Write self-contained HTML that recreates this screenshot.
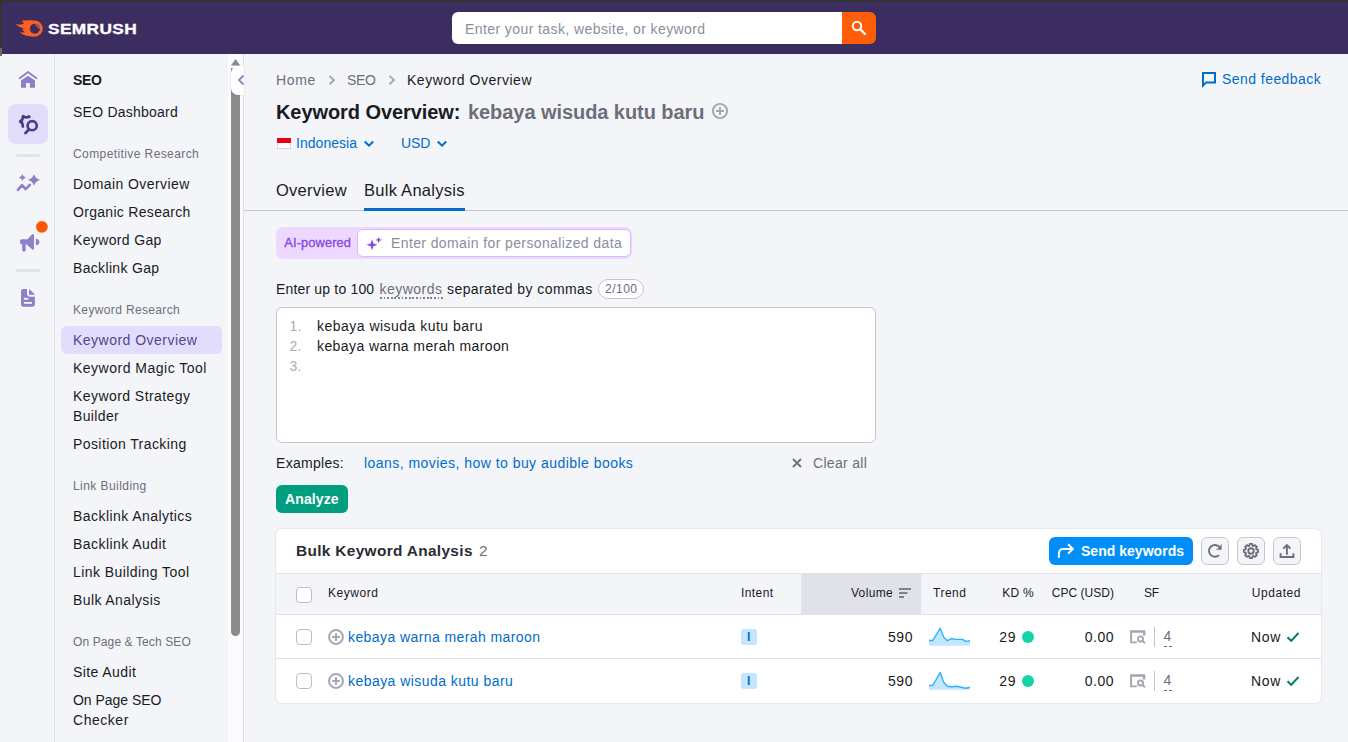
<!DOCTYPE html>
<html>
<head>
<meta charset="utf-8">
<style>
*{box-sizing:border-box;margin:0;padding:0}
html,body{width:1348px;height:742px;overflow:hidden;font-family:"Liberation Sans",sans-serif}
body{background:#f4f5f9;font-family:"Liberation Sans",sans-serif;color:#191b23;position:relative;font-size:15px}
.abs{position:absolute}
.t{position:absolute;white-space:nowrap;line-height:20px}
#topstrip{left:0;top:0;width:1348px;height:2px;background:#333333}
#leftstrip{left:0;top:0;width:2px;height:48px;background:#333333;z-index:5}
#leftstrip2{left:0;top:48px;width:2px;height:7.5px;background:#6b6b6b;z-index:5}
#header{left:2px;top:2px;width:1346px;height:51.6px;background:#3b2d5f}
#rail{left:0;top:54px;width:55px;height:688px;background:#f4f5f9;border-right:1px solid #e0e1e9}
#side{left:56px;top:54px;width:172px;height:688px;background:#f4f5f9}
#sbtrack{left:228px;top:54px;width:15px;height:688px;background:#fbfbfd}
#sbthumb{left:231px;top:68px;width:9px;height:568px;background:#8b8b8b;border-radius:0 0 5px 5px}
#mainborder{left:243px;top:54px;width:1px;height:688px;background:#e0e1e9}
.nav{left:73px;font-size:15px;color:#191b23}
.grp{left:73px;font-size:13px;color:#6c6e79}
.lnk{color:#006dca}
</style>
</head>
<body>
<div class="abs" id="header"></div>
<div class="abs" id="topstrip"></div>
<div class="abs" id="leftstrip"></div><div class="abs" id="leftstrip2"></div>

<!-- logo -->
<svg class="abs" style="left:15px;top:19px" width="30" height="20" viewBox="0 0 30 20">
<path d="M19.7 1.6 C15 1.1 10 1.3 6.4 1.9 C8.6 3 9.2 4.2 8.4 4.9 C6 5.5 3 5.6 0.5 5.3 C3 7.6 7 9.3 10.5 10 L7.2 10.2 C8 11.5 9 12.6 10.2 13.2 L5 13.6 C8 16.3 13 17.9 19.7 17.7 A8.05 8.05 0 0 0 19.7 1.6 Z" fill="#ff5f1f"/>
<circle cx="19.8" cy="9.7" r="5" fill="#3b2d5f"/>
<path d="M20.6 5.9 C22.3 6.3 23.4 7.4 23.8 9.1" stroke="#ff8a5c" stroke-width="1" fill="none" stroke-linecap="round"/>
</svg>
<div class="t" id="logotext" style="left:47.5px;top:19px;font-size:14px;font-weight:bold;color:#fff;letter-spacing:0.3px;-webkit-text-stroke:0.3px #fff;transform-origin:0 50%;transform:scaleX(1.235)">SEMRUSH</div>

<!-- search -->
<div class="abs" style="left:452px;top:12px;width:390px;height:32px;background:#fff;border-radius:6px 0 0 6px"></div>
<div class="abs" style="left:842px;top:12px;width:34px;height:32px;background:#ff5d08;border-radius:0 6px 6px 0"></div>
<div class="t" id="ph1" style="letter-spacing:0.414px;left:465px;top:18.5px;font-size:14px;color:#8a8e9b">Enter your task, website, or keyword</div>
<svg class="abs" style="left:850px;top:19px" width="18" height="18" viewBox="0 0 18 18"><circle cx="7" cy="7" r="4.2" stroke="#fff" stroke-width="2" fill="none"/><path d="M10.3 10.3 L15 15" stroke="#fff" stroke-width="2.4" stroke-linecap="round"/></svg>

<div class="abs" id="rail"></div>
<div class="abs" id="side"></div>
<div class="abs" id="sbtrack"></div>
<div class="abs" id="sbthumb"></div>
<div class="abs" id="mainborder"></div>

<!-- sidebar nav -->
<div class="abs" style="left:61px;top:326px;width:161px;height:27.6px;background:#e3ddfd;border-radius:6px"></div>
<div class="t nav" id="n0" style="letter-spacing:-0.297px;font-size:14px;top:70px;font-weight:bold">SEO</div>
<div class="t nav" id="n1" style="letter-spacing:0.23px;font-size:14px;top:102px">SEO Dashboard</div>
<div class="t grp" id="n2" style="letter-spacing:0.406px;font-size:12px;top:144px">Competitive Research</div>
<div class="t nav" id="n3" style="letter-spacing:0.412px;font-size:14px;top:174px">Domain Overview</div>
<div class="t nav" id="n4" style="letter-spacing:0.304px;font-size:14px;top:202px">Organic Research</div>
<div class="t nav" id="n5" style="letter-spacing:0.359px;font-size:14px;top:230px">Keyword Gap</div>
<div class="t nav" id="n6" style="letter-spacing:0.333px;font-size:14px;top:258px">Backlink Gap</div>
<div class="t grp" id="n7" style="letter-spacing:0.358px;font-size:12px;top:300px">Keyword Research</div>
<div class="t nav" id="n8" style="letter-spacing:0.484px;font-size:14px;top:330px;color:#54468c">Keyword Overview</div>
<div class="t nav" id="n9" style="letter-spacing:0.496px;font-size:14px;top:358px">Keyword Magic Tool</div>
<div class="t nav" id="n10" style="letter-spacing:0.438px;font-size:14px;top:386px">Keyword Strategy</div>
<div class="t nav" id="n11" style="letter-spacing:0.357px;font-size:14px;top:406px">Builder</div>
<div class="t nav" id="n12" style="letter-spacing:0.414px;font-size:14px;top:434px">Position Tracking</div>
<div class="t grp" id="n13" style="letter-spacing:0.436px;font-size:12px;top:476px">Link Building</div>
<div class="t nav" id="n14" style="letter-spacing:0.441px;font-size:14px;top:506px">Backlink Analytics</div>
<div class="t nav" id="n15" style="letter-spacing:0.444px;font-size:14px;top:534px">Backlink Audit</div>
<div class="t nav" id="n16" style="letter-spacing:0.431px;font-size:14px;top:562px">Link Building Tool</div>
<div class="t nav" id="n17" style="letter-spacing:0.392px;font-size:14px;top:590px">Bulk Analysis</div>
<div class="t grp" id="n18" style="letter-spacing:0.114px;font-size:12px;top:632px">On Page &amp; Tech SEO</div>
<div class="t nav" id="n19" style="letter-spacing:0.423px;font-size:14px;top:662px">Site Audit</div>
<div class="t nav" id="n20" style="letter-spacing:-0.033px;font-size:14px;top:690px">On Page SEO</div>
<div class="t nav" id="n21" style="letter-spacing:0.531px;font-size:14px;top:710px">Checker</div>
<svg class="abs" style="left:230px;top:58px" width="11" height="8" viewBox="0 0 11 8"><path d="M1 7.5 L5.6 1 L10.2 7.5 Z" fill="#8b8b8b"/></svg>
<div class="abs" style="left:231px;top:66px;width:13px;height:29px;background:#fff;border-radius:7px 0 0 7px;box-shadow:0 0 2px rgba(0,0,0,0.15)"></div>
<svg class="abs" style="left:237px;top:74px" width="8" height="12" viewBox="0 0 8 12"><path d="M6.5 1.5 L2 6 L6.5 10.5" stroke="#8d80c9" stroke-width="1.8" fill="none"/></svg>

<!-- breadcrumbs -->
<div class="t" id="bc1" style="letter-spacing:0.664px;left:276px;top:70px;font-size:14px;color:#6c6e79">Home</div>
<svg class="abs" style="left:327px;top:74px" width="8" height="12" viewBox="0 0 8 12"><path d="M2.5 1.9 L7 6.1 L2.5 10.3" stroke="#a6a8b3" stroke-width="2" fill="none"/></svg>
<div class="t" id="bc2" style="letter-spacing:-0.365px;left:347px;top:70px;font-size:14px;color:#6c6e79">SEO</div>
<svg class="abs" style="left:387px;top:74px" width="8" height="12" viewBox="0 0 8 12"><path d="M2.5 1.9 L7 6.1 L2.5 10.3" stroke="#a6a8b3" stroke-width="2" fill="none"/></svg>
<div class="t" id="bc3" style="letter-spacing:0.521px;left:407px;top:70px;font-size:14px;color:#191b23">Keyword Overview</div>
<!-- send feedback -->
<svg class="abs" style="left:1201px;top:71px" width="17" height="17" viewBox="0 0 17 17"><path d="M2 14.6 V2 H14 V11.4 H5.2 Z" stroke="#006dca" stroke-width="2" fill="none" stroke-linejoin="miter"/></svg>
<div class="t lnk" id="sf" style="letter-spacing:0.445px;left:1222px;top:69px;font-size:14px">Send feedback</div>
<!-- title -->
<div class="t" id="ttl1" style="letter-spacing:-0.071px;left:276px;top:100px;font-size:20px;line-height:24px;font-weight:bold;color:#191b23">Keyword Overview:</div>
<div class="t" id="ttl2" style="letter-spacing:-0.065px;left:468px;top:100px;font-size:20px;line-height:24px;font-weight:bold;color:#6c6e79">kebaya wisuda kutu baru</div>
<svg class="abs" style="left:711px;top:102px" width="18" height="18" viewBox="0 0 18 18"><circle cx="9" cy="9" r="7.1" stroke="#a3a5b0" stroke-width="1.9" fill="none"/><path d="M9 5 V13 M5 9 H13" stroke="#a3a5b0" stroke-width="1.9"/></svg>
<!-- country / currency -->
<div class="abs" style="left:277px;top:138px;width:14px;height:10.5px;background:#fff;border:1px solid #d6d7dd;border-top:none"></div>
<div class="abs" style="left:277px;top:138px;width:14px;height:5.3px;background:#e70011"></div>
<div class="t lnk" id="ctry" style="letter-spacing:0.038px;left:296px;top:133px;font-size:14px">Indonesia</div>
<svg class="abs" style="left:363px;top:139px" width="12" height="10" viewBox="0 0 12 10"><path d="M1.8 2.5 L6 6.7 L10.2 2.5" stroke="#006dca" stroke-width="2" fill="none"/></svg>
<div class="t lnk" id="cur" style="letter-spacing:-0.062px;left:401px;top:133px;font-size:14px">USD</div>
<svg class="abs" style="left:436px;top:139px" width="12" height="10" viewBox="0 0 12 10"><path d="M1.8 2.5 L6 6.7 L10.2 2.5" stroke="#006dca" stroke-width="2" fill="none"/></svg>
<!-- tabs -->
<div class="abs" style="left:244px;top:210px;width:1104px;height:1px;background:#c4c7cf"></div>
<div class="t" id="tab1" style="left:276px;top:180px;font-size:16.5px;letter-spacing:0.27px;color:#191b23">Overview</div>
<div class="t" id="tab2" style="left:364px;top:180px;font-size:16.5px;letter-spacing:0.27px;color:#191b23">Bulk Analysis</div>
<div class="abs" style="left:364px;top:208px;width:101px;height:3px;background:#006dca"></div>
<!-- AI powered -->
<div class="abs" style="left:276px;top:227px;width:356px;height:32px;background:#edd9ff;border-radius:7px"></div>
<div class="t" id="aip" style="letter-spacing:0.13px;left:284.3px;top:233px;font-size:12.8px;color:#8649e1;-webkit-text-stroke:0.35px #8649e1">AI-powered</div>
<div class="abs" style="left:357px;top:229px;width:273.5px;height:27.5px;background:#fff;border:1px solid #dcb8ff;border-radius:6px"></div>
<svg class="abs" style="left:365.2px;top:234.6px" width="18.5" height="18.5" viewBox="0 0 17 17"><path d="M6.5 4 L7.8 7.7 L11.5 9 L7.8 10.3 L6.5 14 L5.2 10.3 L1.5 9 L5.2 7.7 Z" fill="#8649e1"/><path d="M12.5 1.5 L13.3 3.7 L15.5 4.5 L13.3 5.3 L12.5 7.5 L11.7 5.3 L9.5 4.5 L11.7 3.7 Z" fill="#8649e1"/></svg>
<div class="t" id="ph2" style="letter-spacing:0.388px;left:391px;top:233px;font-size:14px;color:#8a8e9b">Enter domain for personalized data</div>
<!-- label -->
<div class="t" id="lbl1" style="letter-spacing:0.17px;left:276px;top:279px;font-size:14px;color:#191b23">Enter up to 100</div><div class="t" id="lbl2" style="letter-spacing:0.5px;left:379.4px;top:279px;font-size:14px;color:#6c6e79">keywords</div><div class="abs" style="left:380px;top:297px;width:62.5px;height:1.6px;background:repeating-linear-gradient(90deg,#7d808c 0 1.9px,transparent 1.9px 3.6px)"></div><div class="t" id="lbl3" style="letter-spacing:0.42px;left:447px;top:279px;font-size:14px;color:#191b23">separated by commas</div>
<div class="abs" style="left:598px;top:279px;width:46px;height:20px;background:#fff;border:1px solid #c4c7cf;border-radius:10px"></div>
<div class="t" id="cnt" style="letter-spacing:0.503px;left:605px;top:279px;font-size:12px;color:#6c6e79">2/100</div>
<!-- textarea -->
<div class="abs" style="left:276px;top:307px;width:600px;height:136px;background:#fff;border:1px solid #c4c7cf;border-radius:6px"></div>
<div class="t" style="letter-spacing:0px;left:289.6px;top:316px;font-size:14px;color:#a9abb6">1.</div>
<div class="t" style="letter-spacing:0px;left:289.6px;top:336px;font-size:14px;color:#a9abb6">2.</div>
<div class="t" style="letter-spacing:0px;left:289.6px;top:356px;font-size:14px;color:#a9abb6">3.</div>
<div class="t" id="kw1" style="letter-spacing:0.481px;left:317px;top:316px;font-size:14px;color:#191b23">kebaya wisuda kutu baru</div>
<div class="t" id="kw2" style="letter-spacing:0.408px;left:317px;top:336px;font-size:14px;color:#191b23">kebaya warna merah maroon</div>
<!-- examples -->
<div class="t" id="ex1" style="letter-spacing:0.297px;left:276px;top:453px;font-size:14px;color:#191b23">Examples:</div>
<div class="t lnk" id="ex2" style="letter-spacing:0.46px;left:364px;top:453px;font-size:14px">loans, movies, how to buy audible books</div>
<svg class="abs" style="left:791px;top:457px" width="12" height="12" viewBox="0 0 12 12"><path d="M2 2 L10 10 M10 2 L2 10" stroke="#6c6e79" stroke-width="1.8"/></svg>
<div class="t" id="clr" style="letter-spacing:0.318px;left:813px;top:453px;font-size:14px;color:#6c6e79">Clear all</div>
<!-- analyze -->
<div class="abs" style="left:276px;top:485px;width:72px;height:28px;background:#009f81;border-radius:6px"></div>
<div class="t" id="anz" style="letter-spacing:0.109px;left:285px;top:489px;font-size:14px;color:#fff;font-weight:bold">Analyze</div>

<!-- table card -->
<div class="abs" style="left:276px;top:529px;width:1045px;height:174px;background:#fff;border-radius:6px;box-shadow:0 0 1px 1px rgba(25,27,35,0.06)"></div>
<div class="t" id="bka" style="left:296px;top:541px;font-size:15.4px;letter-spacing:0.34px;font-weight:bold;color:#2a2c34">Bulk Keyword Analysis <span style="font-weight:normal;color:#6c6e79;margin-left:1.5px">2</span></div>
<div class="abs" style="left:1049px;top:537px;width:144px;height:28px;background:#008ff8;border-radius:6px"></div>
<svg class="abs" style="left:1057px;top:543px" width="18" height="16" viewBox="0 0 18 16"><path d="M1.9 14.7 V10.5 Q1.9 6 6.4 6 H15.3" stroke="#fff" stroke-width="2" fill="none"/><path d="M11.1 1.3 L15.9 6 L11.1 10.6" stroke="#fff" stroke-width="2" fill="none"/></svg>
<div class="t" id="sk" style="letter-spacing:0.026px;left:1081px;top:541px;font-size:14px;font-weight:bold;color:#fff">Send keywords</div>
<div class="abs" style="left:1201px;top:537px;width:28px;height:28px;background:#f4f5f9;border:1px solid #c4c7cf;border-radius:6px"></div>
<div class="abs" style="left:1237px;top:537px;width:28px;height:28px;background:#f4f5f9;border:1px solid #c4c7cf;border-radius:6px"></div>
<div class="abs" style="left:1273px;top:537px;width:28px;height:28px;background:#f4f5f9;border:1px solid #c4c7cf;border-radius:6px"></div>
<svg class="abs" style="left:1207px;top:543px" width="16" height="16" viewBox="0 0 16 16"><path d="M12.42 4.11 A5.9 5.9 0 1 0 12.07 12.07" stroke="#6c6e79" stroke-width="1.9" fill="none"/><path d="M14.6 0.8 V6.7 H8.9 L11.6 5 L13 3.2 Z" fill="#6c6e79"/></svg>
<svg class="abs" style="left:1241.8px;top:541.9px" width="18" height="18" viewBox="0 0 18 18"><path d="M7.48 3.61 L7.71 1.92 L10.29 1.92 L10.52 3.61 L11.74 4.11 L13.09 3.08 L14.92 4.91 L13.89 6.26 L14.39 7.48 L16.08 7.71 L16.08 10.29 L14.39 10.52 L13.89 11.74 L14.92 13.09 L13.09 14.92 L11.74 13.89 L10.52 14.39 L10.29 16.08 L7.71 16.08 L7.48 14.39 L6.26 13.89 L4.91 14.92 L3.08 13.09 L4.11 11.74 L3.61 10.52 L1.92 10.29 L1.92 7.71 L3.61 7.48 L4.11 6.26 L3.08 4.91 L4.91 3.08 L6.26 4.11 Z" stroke="#6c6e79" stroke-width="1.8" fill="none" stroke-linejoin="round"/><circle cx="9" cy="9" r="2.7" fill="none" stroke="#6c6e79" stroke-width="1.9"/></svg>
<svg class="abs" style="left:1279px;top:543px" width="16" height="16" viewBox="0 0 16 16"><path d="M7.9 11.8 V2.4 M4.3 5.7 L7.9 2 L11.5 5.7" stroke="#6c6e79" stroke-width="1.9" fill="none"/><path d="M1.6 10.2 V14 H14.4 V10.2" stroke="#6c6e79" stroke-width="1.9" fill="none"/></svg>
<div class="abs" style="left:276px;top:573px;width:1045px;height:42px;background:#f4f5f9;border-top:1px solid #e0e1e9;border-bottom:1px solid #e0e1e9"></div>
<div class="abs" style="left:801px;top:573px;width:120px;height:41px;background:#e0e1e9"></div>
<div class="abs" style="left:296px;top:587px;width:16px;height:16px;background:#fff;border:1px solid #bbbec7;border-radius:4px"></div>
<div class="t" id="h1" style="letter-spacing:0.556px;left:328px;top:583px;font-size:12px;color:#191b23">Keyword</div>
<div class="t" id="h2" style="letter-spacing:0.417px;left:741px;top:583px;font-size:12px;color:#191b23">Intent</div>
<div class="t" id="h3" style="letter-spacing:0.339px;right:455px;top:583px;font-size:12px;color:#191b23">Volume</div>
<div class="t" id="h4" style="letter-spacing:0.516px;left:933px;top:583px;font-size:12px;color:#191b23">Trend</div>
<div class="t" id="h5" style="letter-spacing:0.262px;right:314px;top:583px;font-size:12px;color:#191b23">KD %</div>
<div class="t" id="h6" style="letter-spacing:0.019px;right:234px;top:583px;font-size:12px;color:#191b23">CPC (USD)</div>
<div class="t" id="h7" style="letter-spacing:-0.266px;left:1144px;top:583px;font-size:12px;color:#191b23">SF</div>
<div class="t" id="h8" style="letter-spacing:0.54px;right:47px;top:583px;font-size:12px;color:#191b23">Updated</div>
<svg class="abs" style="left:898px;top:587px" width="14" height="12" viewBox="0 0 14 12"><path d="M1 2 H13 M1 6 H9.5 M1 10 H6" stroke="#7f818c" stroke-width="1.8"/></svg>
<div class="abs" style="left:276px;top:658px;width:1045px;height:1px;background:#e0e1e9"></div>
<div class="abs" style="left:296px;top:629px;width:16px;height:16px;background:#fff;border:1px solid #bbbec7;border-radius:4px"></div>
<svg class="abs" style="left:326.85px;top:628px" width="18" height="18" viewBox="0 0 18 18"><circle cx="9" cy="9" r="6.95" stroke="#a3a5b0" stroke-width="2" fill="none"/><path d="M9 5.2 V12.8 M5.2 9 H12.8" stroke="#a3a5b0" stroke-width="2"/></svg>
<div class="t lnk" id="r1k" style="letter-spacing:0.412px;left:348px;top:627px;font-size:14px">kebaya warna merah maroon</div>
<div class="abs" style="left:741px;top:629px;width:16px;height:16px;background:#c4e5fe;border-radius:3px"></div>
<div class="t" style="left:747px;top:627px;font-size:12px;font-weight:bold;color:#006dca">I</div>
<div class="t" id="r1v" style="letter-spacing:0.557px;right:435px;top:627px;font-size:14px;color:#191b23">590</div>
<svg class="abs" style="left:929px;top:626px" width="42" height="20" viewBox="0 0 42 20"><polygon points="0,14.2 3.6,14.7 11.2,2.3 14.7,11.2 18.5,14.7 22.3,12.5 26.3,13.4 33.4,13.4 36.9,15.4 41,14.7 41,19.8 0,19.8" fill="#c4e5fe"/><polyline points="0,14.2 3.6,14.7 11.2,2.3 14.7,11.2 18.5,14.7 22.3,12.5 26.3,13.4 33.4,13.4 36.9,15.4 41,14.7" stroke="#2bb3ff" stroke-width="1.4" fill="none" stroke-linejoin="round"/></svg>
<div class="t" id="r1kd" style="letter-spacing:0.555px;right:332px;top:627px;font-size:14px;color:#191b23">29</div>
<div class="abs" style="left:1022px;top:631px;width:12px;height:12px;background:#12d5a8;border-radius:50%"></div>
<div class="t" id="r1c" style="letter-spacing:0.488px;right:234px;top:627px;font-size:14px;color:#191b23">0.00</div>
<svg class="abs" style="left:1130px;top:630px" width="16" height="14" viewBox="0 0 16 14"><path d="M6.8 12.4 H1.1 V1.2" stroke="#a3a5b0" stroke-width="1.9" fill="none"/><path d="M0.2 1.5 H15 M14.1 1.5 V5.4" stroke="#a3a5b0" stroke-width="2.6" fill="none"/><circle cx="10.5" cy="8.9" r="2.6" stroke="#a3a5b0" stroke-width="1.8" fill="none"/><path d="M12.5 10.9 L14.9 13.3" stroke="#a3a5b0" stroke-width="1.9"/></svg>
<div class="abs" style="left:1154px;top:627px;width:1px;height:20px;background:#c4c7cf"></div>
<div class="t" id="r1s" style="letter-spacing:0.547px;left:1163.6px;top:626px;font-size:14px;color:#6c6e79">4</div>
<div class="abs" style="left:1163.5px;top:646px;width:9px;height:1px;background:repeating-linear-gradient(90deg,#6c6e79 0 3px,transparent 3px 5px)"></div>
<div class="t" id="r1u" style="letter-spacing:0.667px;right:67px;top:627px;font-size:14px;color:#191b23">Now</div>
<svg class="abs" style="left:1286px;top:631px" width="14" height="12" viewBox="0 0 14 12"><path d="M1.5 6.2 L5.2 9.8 L12.5 2" stroke="#007c65" stroke-width="1.9" fill="none"/></svg>
<div class="abs" style="left:296px;top:673px;width:16px;height:16px;background:#fff;border:1px solid #bbbec7;border-radius:4px"></div>
<svg class="abs" style="left:326.85px;top:672px" width="18" height="18" viewBox="0 0 18 18"><circle cx="9" cy="9" r="6.95" stroke="#a3a5b0" stroke-width="2" fill="none"/><path d="M9 5.2 V12.8 M5.2 9 H12.8" stroke="#a3a5b0" stroke-width="2"/></svg>
<div class="t lnk" id="r2k" style="letter-spacing:0.451px;left:348px;top:671px;font-size:14px">kebaya wisuda kutu baru</div>
<div class="abs" style="left:741px;top:673px;width:16px;height:16px;background:#c4e5fe;border-radius:3px"></div>
<div class="t" style="left:747px;top:671px;font-size:12px;font-weight:bold;color:#006dca">I</div>
<div class="t" id="r2v" style="letter-spacing:0.557px;right:435px;top:671px;font-size:14px;color:#191b23">590</div>
<svg class="abs" style="left:929px;top:670px" width="42" height="20" viewBox="0 0 42 20"><polygon points="0,15.5 3.6,15.5 11.2,2.6 14.7,12.2 18.5,16.2 22.3,16.7 27.8,16.2 36.9,18.3 41,17.2 41,19.8 0,19.8" fill="#c4e5fe"/><polyline points="0,15.5 3.6,15.5 11.2,2.6 14.7,12.2 18.5,16.2 22.3,16.7 27.8,16.2 36.9,18.3 41,17.2" stroke="#2bb3ff" stroke-width="1.4" fill="none" stroke-linejoin="round"/></svg>
<div class="t" id="r2kd" style="letter-spacing:0.555px;right:332px;top:671px;font-size:14px;color:#191b23">29</div>
<div class="abs" style="left:1022px;top:675px;width:12px;height:12px;background:#12d5a8;border-radius:50%"></div>
<div class="t" id="r2c" style="letter-spacing:0.488px;right:234px;top:671px;font-size:14px;color:#191b23">0.00</div>
<svg class="abs" style="left:1130px;top:674px" width="16" height="14" viewBox="0 0 16 14"><path d="M6.8 12.4 H1.1 V1.2" stroke="#a3a5b0" stroke-width="1.9" fill="none"/><path d="M0.2 1.5 H15 M14.1 1.5 V5.4" stroke="#a3a5b0" stroke-width="2.6" fill="none"/><circle cx="10.5" cy="8.9" r="2.6" stroke="#a3a5b0" stroke-width="1.8" fill="none"/><path d="M12.5 10.9 L14.9 13.3" stroke="#a3a5b0" stroke-width="1.9"/></svg>
<div class="abs" style="left:1154px;top:671px;width:1px;height:20px;background:#c4c7cf"></div>
<div class="t" id="r2s" style="letter-spacing:0.547px;left:1163.6px;top:670px;font-size:14px;color:#6c6e79">4</div>
<div class="abs" style="left:1163.5px;top:690px;width:9px;height:1px;background:repeating-linear-gradient(90deg,#6c6e79 0 3px,transparent 3px 5px)"></div>
<div class="t" id="r2u" style="letter-spacing:0.667px;right:67px;top:671px;font-size:14px;color:#191b23">Now</div>
<svg class="abs" style="left:1286px;top:675px" width="14" height="12" viewBox="0 0 14 12"><path d="M1.5 6.2 L5.2 9.8 L12.5 2" stroke="#007c65" stroke-width="1.9" fill="none"/></svg>

<!-- rail icons -->
<svg class="abs" style="left:12px;top:64px" width="32" height="32" viewBox="0 0 32 32"><path d="M7.7 14.2 L16 7.9 L24.4 14.2" stroke="#8d80c9" stroke-width="1.9" fill="none" stroke-linecap="round" stroke-linejoin="round"/><path d="M9 16.6 L16 11.7 L23 16.6 V23.8 H17.9 V19 H14 V23.8 H9 Z" fill="#8d80c9"/></svg>
<div class="abs" style="left:8px;top:104px;width:40px;height:40px;background:#e2dcfb;border-radius:8px"></div>
<svg class="abs" id="seoicon" style="left:12px;top:108px" width="32" height="32" viewBox="0 0 32 32">
<path d="M17.3 9 L14 9.4 L11 8.7 L10.4 11.4 L8.7 13.4 L10.3 15.4 L10.9 18.6" stroke="#4b3d85" stroke-width="2.7" fill="none" stroke-linejoin="round" stroke-linecap="round"/>
<circle cx="11.3" cy="8.3" r="1.5" fill="#4b3d85"/><circle cx="16.8" cy="8.4" r="1.5" fill="#4b3d85"/><circle cx="9" cy="13.4" r="2" fill="#4b3d85"/>
<circle cx="20.2" cy="17.7" r="4.55" stroke="#4b3d85" stroke-width="2.7" fill="none"/>
<path d="M16.9 21.6 L13.5 24.9" stroke="#4b3d85" stroke-width="2.8" stroke-linecap="round"/>
</svg>
<div class="abs" style="left:16px;top:154px;width:24px;height:3px;background:#e0e1e9;border-radius:2px"></div>
<svg class="abs" style="left:12px;top:166px" width="32" height="32" viewBox="0 0 32 32">
<path d="M22 8.100000000000001 Q23.22 12.74 28.1 13.9 Q23.22 15.06 22 19.7 Q20.78 15.06 15.9 13.9 Q20.78 12.74 22 8.100000000000001 Z" fill="#8d80c9"/>
<path d="M10.4 7.9 Q11.030000000000001 10.77 13.9 11.4 Q11.030000000000001 12.030000000000001 10.4 14.9 Q9.77 12.030000000000001 6.9 11.4 Q9.77 10.77 10.4 7.9 Z" fill="#8d80c9"/>
<path d="M5.9 23.8 L10.1 19.2 L13.6 23.1 L17.8 18.9" stroke="#8d80c9" stroke-width="2.6" fill="none" stroke-linecap="round" stroke-linejoin="round"/>
</svg>
<svg class="abs" style="left:12px;top:216px" width="40" height="40" viewBox="0 0 40 40">
<path d="M8.1 24.7 Q8.1 23.2 9.6 23.2 H15.6 L19.8 18.4 Q22 17.2 22 19.6 V32.2 Q22 34.6 19.9 33.2 L14.4 28.3 H9.6 Q8.1 28.3 8.1 26.8 Z" fill="#8d80c9"/>
<rect x="10.2" y="26" width="3.5" height="9.8" rx="1.75" fill="#8d80c9"/>
<path d="M23.9 22.7 C28.6 22.9 28.6 29 23.9 29.2 Z" fill="#8d80c9"/>
<circle cx="29.9" cy="10.8" r="5.9" fill="#ff5500"/>
</svg>
<div class="abs" style="left:16px;top:269px;width:24px;height:3px;background:#e0e1e9;border-radius:2px"></div>
<svg class="abs" style="left:12px;top:282px" width="32" height="32" viewBox="0 0 32 32">
<path d="M11.2 6.9 H15 V11.5 Q15 14.8 18.3 14.8 H22.85 V22.6 Q22.85 24.8 20.6 24.8 H11.2 Q9.05 24.8 9.05 22.6 V9.1 Q9.05 6.9 11.2 6.9 Z" fill="#8d80c9"/>
<path d="M17 7 L22.8 12.3 V12.8 H17 Z" fill="#8d80c9"/>
<rect x="11.85" y="15.9" width="4.35" height="1.8" fill="#f4f5f9"/><rect x="11.85" y="20" width="8.15" height="1.8" fill="#f4f5f9"/>
</svg>
</body>
</html>
